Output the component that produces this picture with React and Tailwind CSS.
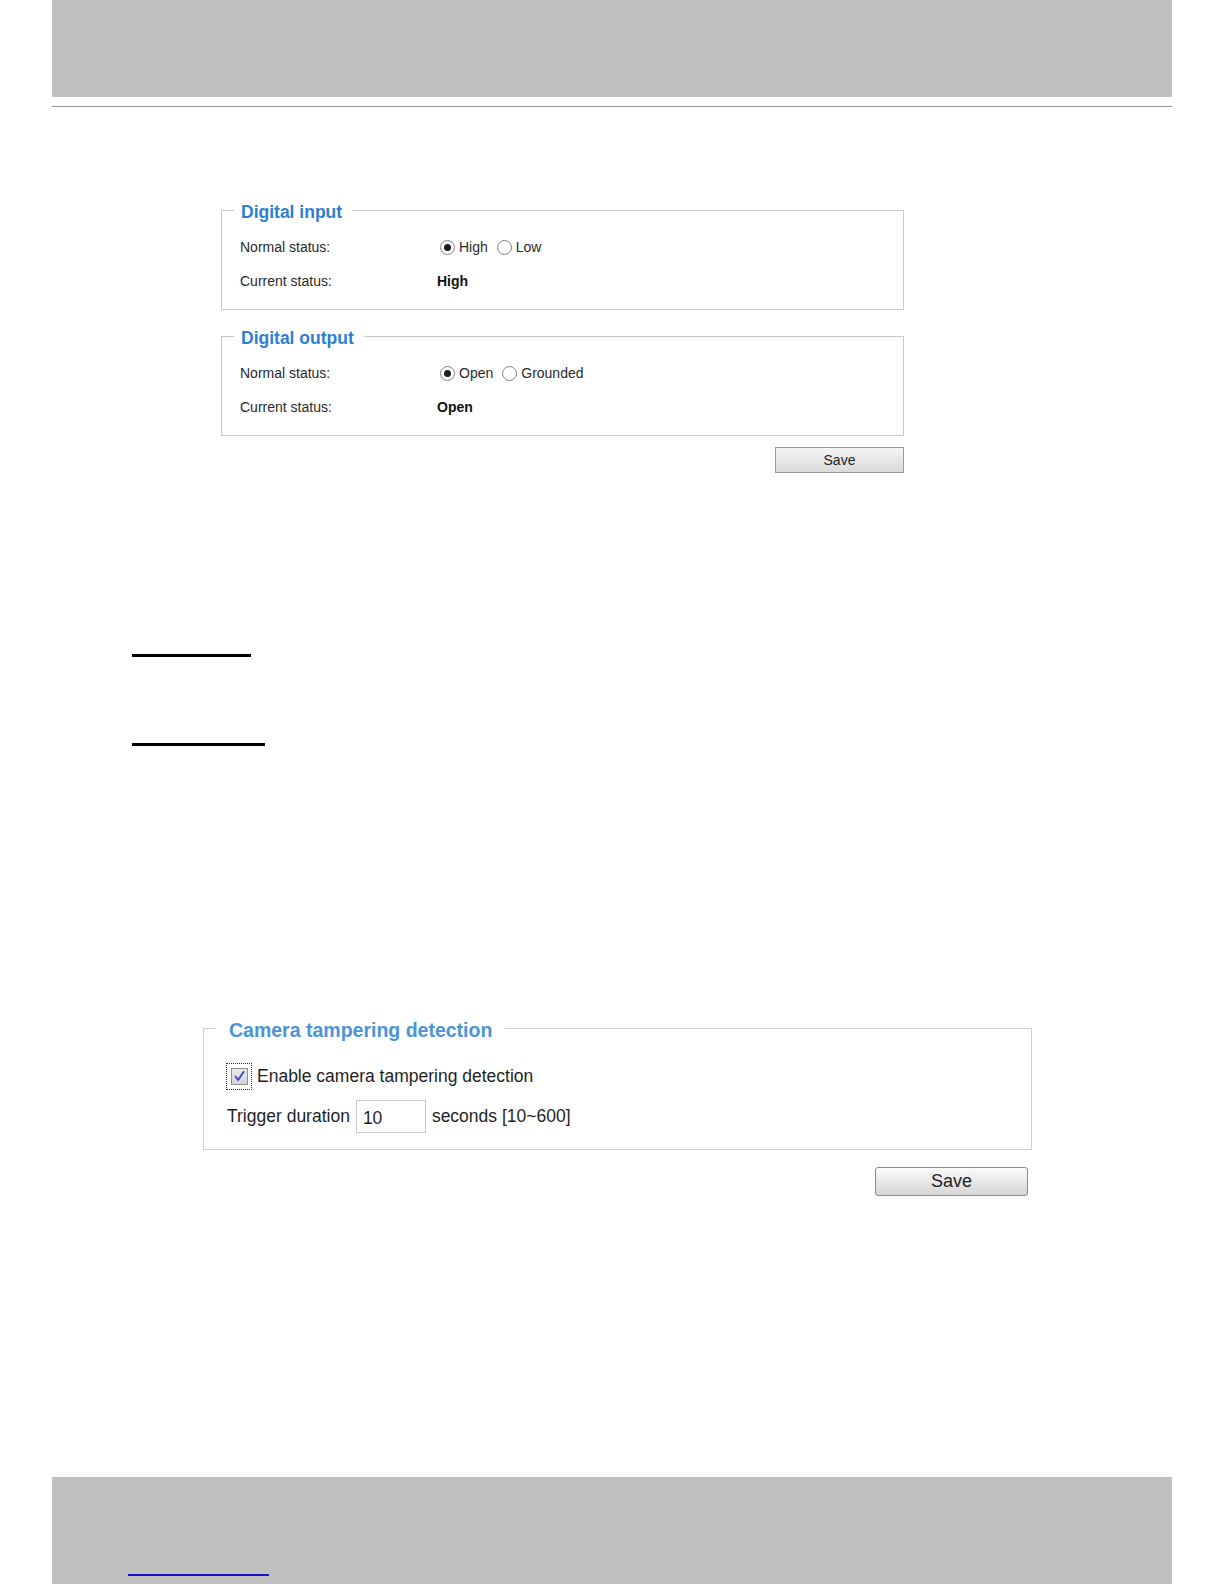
import React from "react";

function Radio({ checked }) {
  return (
    <span className="w-[15px] h-[15px] rounded-full border border-[#808080] bg-white flex items-center justify-center shrink-0">
      {checked && <span className="w-[7px] h-[7px] rounded-full bg-[#1e1e1e]" />}
    </span>
  );
}

function Row({ label, children }) {
  return (
    <div className="flex items-center h-[24px]">
      <div className="w-[197px] text-[14px] text-[#2a2a2a]">{label}</div>
      <div className="flex items-center text-[14px] text-[#2a2a2a]">{children}</div>
    </div>
  );
}

function IOFieldset({ title, opts, current }) {
  return (
    <fieldset className="border border-[#c9c9c9] pl-[18px] pt-[15px] pb-[16px]">
      <legend className="ml-[-6px] pl-[7px] pr-[10px] text-[17.5px] leading-[20px] font-bold text-[#2c7fd2]">
        <span className="relative top-[2px]">{title}</span>
      </legend>
      <Row label="Normal status:">
        <span className="ml-[3px]">
          <Radio checked />
        </span>
        <span className="ml-[4px]">{opts[0]}</span>
        <span className="ml-[9px]">
          <Radio />
        </span>
        <span className="ml-[4px]">{opts[1]}</span>
      </Row>
      <div className="mt-[10px]">
        <Row label="Current status:">
          <span className="font-bold text-[#111]">{current}</span>
        </Row>
      </div>
    </fieldset>
  );
}

export default function App() {
  return (
    <div className="w-[1224px] h-[1584px] bg-white flex flex-col font-['Liberation_Sans',Arial,sans-serif]">
      <div className="ml-[52px] w-[1120px] h-[97px] bg-[#c0c0c0] shrink-0" />
      <div className="ml-[52px] w-[1120px] h-px mt-[9px] bg-[#959595] shrink-0" />

      <div className="ml-[221px] w-[683px] mt-[93px] flex flex-col shrink-0">
        <IOFieldset title="Digital input" opts={["High", "Low"]} current="High" />
        <div className="mt-[16px]">
          <IOFieldset title="Digital output" opts={["Open", "Grounded"]} current="Open" />
        </div>
        <button className="self-end mt-[11px] w-[129px] h-[26px] border border-[#9a9a9a] bg-gradient-to-b from-[#f5f5f5] to-[#dadada] text-[14px] text-[#222] flex items-center justify-center">
          Save
        </button>
      </div>

      <div className="ml-[132px] w-[119px] h-[3px] bg-black mt-[181px] shrink-0" />
      <div className="ml-[132px] w-[133px] h-[3px] bg-black mt-[86px] shrink-0" />

      <div className="ml-[203px] w-[829px] mt-[271px] flex flex-col shrink-0">
        <fieldset className="border border-[#cfcfcf] pl-[22px] pt-[24px] pb-[16px]">
          <legend className="ml-[-10px] pl-[13px] pr-[13px] text-[19.5px] leading-[22px] font-bold text-[#4a94d8]">
            <span className="relative top-[2px]">Camera tampering detection</span>
          </legend>
          <div className="flex items-center h-[27px]">
            <span className="w-[26px] h-[27px] border border-dotted border-[#333] flex items-center justify-center shrink-0">
              <span className="w-[17px] h-[17px] border border-[#8e8e8e] bg-gradient-to-b from-[#e9eaf0] to-[#d3d5de] flex items-center justify-center">
                <svg width="13" height="13" viewBox="0 0 13 13">
                  <path d="M2.5 6.5 L5.2 10 L10.5 2" fill="none" stroke="#4848b4" strokeWidth="2" strokeLinecap="round" strokeLinejoin="round" />
                </svg>
              </span>
            </span>
            <span className="ml-[5px] text-[17.5px] text-[#1f1f1f]">Enable camera tampering detection</span>
          </div>
          <div className="flex items-center h-[33px] mt-[10px]">
            <span className="text-[17.5px] text-[#1f1f1f] ml-[1px]">Trigger duration</span>
            <span className="ml-[6px] w-[70px] h-[33px] border border-[#c6c6c6] bg-white flex items-center pl-[6px] text-[17.5px] text-[#1f1f1f] pt-[3px]">
              10
            </span>
            <span className="ml-[6px] text-[17.5px] text-[#1f1f1f]">seconds [10~600]</span>
          </div>
        </fieldset>
        <button className="self-end mr-[4px] mt-[17px] w-[153px] h-[29px] rounded-[3px] border border-[#8c8c8c] bg-gradient-to-b from-[#fbfbfb] to-[#d6d6d6] text-[18px] text-[#222] flex items-center justify-center">
          Save
        </button>
      </div>

      <div className="mt-auto ml-[52px] w-[1120px] h-[107px] bg-[#c0c0c0] shrink-0 flex flex-col justify-end pb-[8px] pl-[76px]">
        <div className="w-[141px] h-[2px] bg-[#1414c8]" />
      </div>
    </div>
  );
}
